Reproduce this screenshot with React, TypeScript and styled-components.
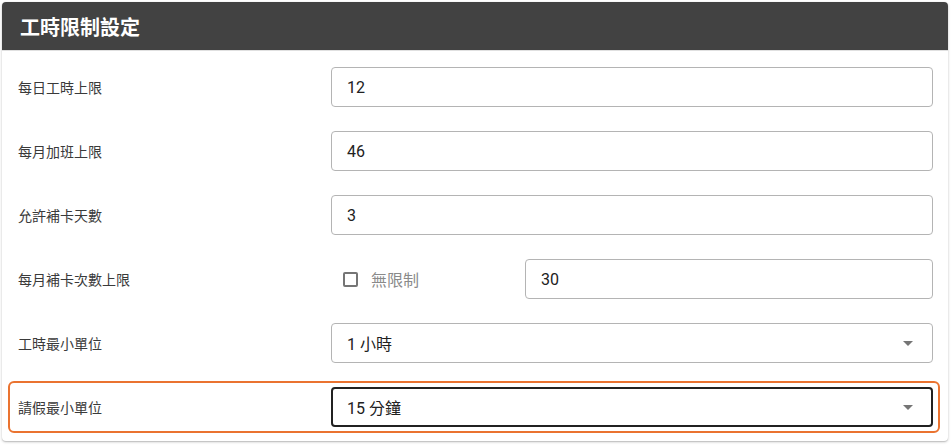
import styled, { createGlobalStyle } from "styled-components";

const GlobalStyle = createGlobalStyle`
  body {
    margin: 0;
    background: #ffffff;
    font-family: Roboto, "Noto Sans CJK TC", sans-serif;
  }
`;

const Wrapper = styled.div`
  padding: 2px 3px 4px 2px;
`;

const Card = styled.div`
  background: #ffffff;
  border-radius: 4px;
  box-shadow: 0 1px 3px rgba(0, 0, 0, 0.2), 0 1px 1px rgba(0, 0, 0, 0.12);
  overflow: hidden;
`;

const Header = styled.div`
  height: 48px;
  background-color: #424242;
  border-bottom: 1px solid #e0e0e0;
  display: flex;
  align-items: center;
  padding-left: 18px;
`;

const Title = styled.h2`
  margin: 0;
  color: #ffffff;
  font-size: 20px;
  font-weight: 700;
  font-family: Roboto, "Noto Sans CJK TC", sans-serif;
`;

const Body = styled.div`
  display: flex;
  flex-direction: column;
  gap: 12px;
  padding: 10px 8px 8px 6px;
`;

const Row = styled.div<{ active?: boolean }>`
  display: flex;
  align-items: center;
  border: 2px solid ${(p) => (p.active ? "#ea7330" : "transparent")};
  border-radius: 6px;
  padding: 4px 5px 4px 8px;
`;

const Label = styled.div`
  width: 313px;
  flex-shrink: 0;
  font-size: 14px;
  color: #3a3a3a;
`;

const Field = styled.div`
  flex: 1;
  display: flex;
  align-items: center;
`;

const Input = styled.div<{ focused?: boolean }>`
  flex: 1;
  height: 40px;
  box-sizing: border-box;
  border: ${(p) => (p.focused ? "2px solid #212121" : "1px solid #b4b4b4")};
  border-radius: 4px;
  display: flex;
  align-items: center;
  padding: 0 ${(p) => (p.focused ? "18px" : "19px")} 0
    ${(p) => (p.focused ? "14px" : "15px")};
  font-size: 16px;
  color: #212121;
`;

const Value = styled.span`
  flex: 1;
`;

const Arrow = styled.span`
  width: 0;
  height: 0;
  border-left: 5px solid transparent;
  border-right: 5px solid transparent;
  border-top: 5px solid #757575;
`;

const CheckGroup = styled.label`
  width: 194px;
  flex-shrink: 0;
  display: flex;
  align-items: center;
  gap: 13px;
  padding-left: 12px;
  box-sizing: border-box;
  font-size: 16px;
  color: #8a8a8a;
`;

const Box = styled.span`
  width: 15px;
  height: 15px;
  box-sizing: border-box;
  border: 2px solid #757575;
  border-radius: 2px;
`;

const rows = [
  { label: "每日工時上限", value: "12" },
  { label: "每月加班上限", value: "46" },
  { label: "允許補卡天數", value: "3" },
];

function App() {
  return (
    <Wrapper>
      <GlobalStyle />
      <Card>
        <Header>
          <Title>工時限制設定</Title>
        </Header>
        <Body>
          {rows.map((r) => (
            <Row key={r.label}>
              <Label>{r.label}</Label>
              <Field>
                <Input>
                  <Value>{r.value}</Value>
                </Input>
              </Field>
            </Row>
          ))}
          <Row>
            <Label>每月補卡次數上限</Label>
            <Field>
              <CheckGroup>
                <Box />
                無限制
              </CheckGroup>
              <Input>
                <Value>30</Value>
              </Input>
            </Field>
          </Row>
          <Row>
            <Label>工時最小單位</Label>
            <Field>
              <Input>
                <Value>1 小時</Value>
                <Arrow />
              </Input>
            </Field>
          </Row>
          <Row active>
            <Label>請假最小單位</Label>
            <Field>
              <Input focused>
                <Value>15 分鐘</Value>
                <Arrow />
              </Input>
            </Field>
          </Row>
        </Body>
      </Card>
    </Wrapper>
  );
}

export default App;
